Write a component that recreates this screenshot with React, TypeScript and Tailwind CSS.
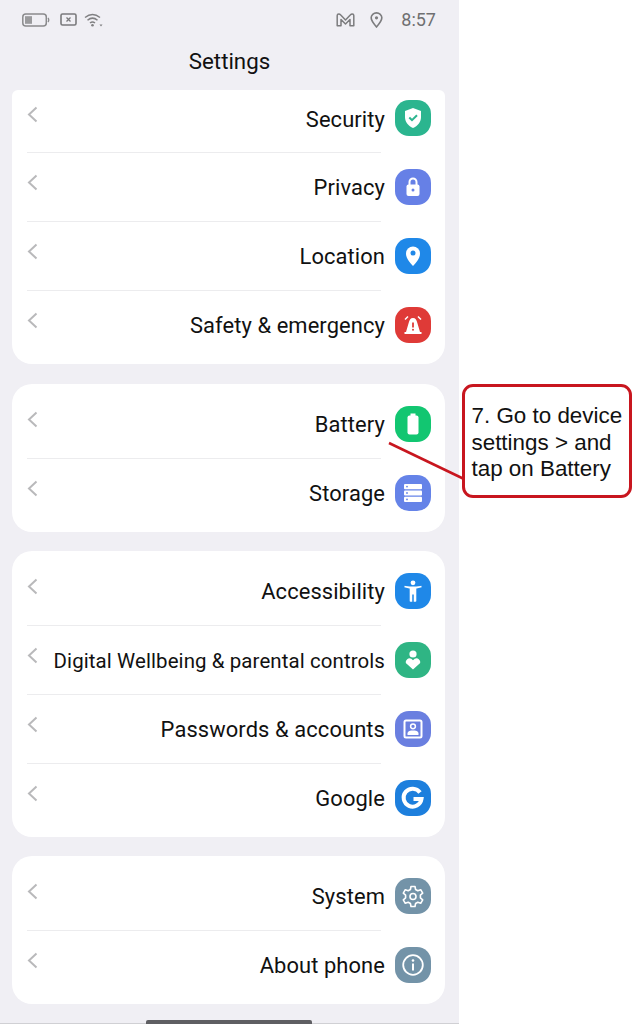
import type { ReactNode } from "react"

type RowProps = {
    label: string
    color: string
    icon: ReactNode
    last?: boolean
    short?: boolean
    small?: boolean
}

const Chevron = ({ short }: { short?: boolean }) => (
    <svg width="11" height="17" viewBox="0 0 11 17" className={`absolute left-[15px] ${short ? "top-[16px]" : "top-[22px]"}`} fill="none">
        <path d="M9.5 1.5 L2 8.5 L9.5 15.5" stroke="#b9b9bb" strokeWidth="2" />
    </svg>
)

const Row = ({ label, color, icon, last, short, small }: RowProps) => (
    <div className={`relative flex items-center justify-end pr-[14px] ${short ? "h-[62px] pb-[6px]" : "h-[69px]"}`}>
        <Chevron short={short} />
        <span className={`${small ? "text-[20.45px]" : "text-[21.9px]"} pt-[3px] leading-none text-[#111] tracking-[0.1px] mr-[10px] whitespace-nowrap`}>{label}</span>
        <div className={`w-[36px] h-[36px] rounded-[14px] flex items-center justify-center ${color}`}>
            <svg width="26" height="26" viewBox="0 0 26 26" fill="none">{icon}</svg>
        </div>
        {!last && <div className="absolute left-[15px] bottom-[-1px] w-[354px] h-px bg-[#ececee]"></div>}
    </div>
)

const App = () => {
    return (
        <div className="relative w-[637px] h-[1024px] overflow-hidden bg-white font-['Roboto',sans-serif]">
            <div className="w-[459px] h-[1024px] bg-[#f0eff4] border-b border-[#d0d0d4]">
                <div className="h-[39px] flex items-center justify-between pl-[22px] pr-[23px]">
                    <div className="flex items-center">
                        <svg width="28" height="14" viewBox="0 0 28 14" fill="none">
                            <rect x="0.8" y="1" width="23.5" height="12" rx="3" stroke="#8a8a8c" strokeWidth="1.5" />
                            <rect x="3" y="3.2" width="7" height="7.6" fill="#9a9a9c" />
                            <path d="M26 5 Q27.5 7 26 9" stroke="#8a8a8c" strokeWidth="1.3" />
                        </svg>
                        <svg width="17" height="13" viewBox="0 0 17 13" fill="none" className="ml-[10px]">
                            <rect x="1" y="1" width="15" height="11" rx="1.5" stroke="#7a7a7c" strokeWidth="1.6" />
                            <path d="M6.5 4.5 L10.5 8.5 M10.5 4.5 L6.5 8.5" stroke="#7a7a7c" strokeWidth="1.3" />
                        </svg>
                        <svg width="19" height="14" viewBox="0 0 19 14" fill="none" className="ml-[7px]">
                            <path d="M1 4.5 Q8.5 -1.5 16 4.5 M3.5 7.3 Q8.5 3 13.5 7.3 M6 10 Q8.5 8 11 10" stroke="#808082" strokeWidth="1.5" />
                            <circle cx="8.5" cy="12.3" r="1.3" fill="#808082" />
                            <path d="M15.5 11.5 L18.5 11.5 L17 13.5 Z" fill="#808082" />
                        </svg>
                    </div>
                    <div className="flex items-center">
                        <svg width="19" height="14" viewBox="0 0 19 14" fill="none">
                            <path d="M1.2 12.8 V2.5 Q1.2 1 2.8 1 Q3.8 1 4.5 1.8 L9.5 7 L14.5 1.8 Q15.2 1 16.2 1 Q17.8 1 17.8 2.5 V12.8 H14 V6.5 L9.5 11 L5 6.5 V12.8 Z" stroke="#7c7c7e" strokeWidth="1.5" strokeLinejoin="round" />
                        </svg>
                        <svg width="13" height="16" viewBox="0 0 12 15" fill="none" className="ml-[15px]">
                            <path d="M6 14 Q1 8.5 1 5.5 A5 4.7 0 0 1 11 5.5 Q11 8.5 6 14 Z" stroke="#7c7c7e" strokeWidth="1.5" />
                            <circle cx="6" cy="5.5" r="1.5" fill="#7c7c7e" />
                        </svg>
                        <span className="ml-[18px] text-[18px] leading-none text-[#6f6f71]">8:57</span>
                    </div>
                </div>
                <div className="h-[51px] flex items-center justify-center pb-[6px] text-[22.3px] leading-none text-[#111]">Settings</div>

                <div className="ml-[12px] mr-[14px] flex flex-col gap-[19px]">
                    <div className="bg-white rounded-t-[6px] rounded-b-[20px] pb-[5px] mb-[1px]">
                        <Row label="Security" color="bg-[#2bb58f]" short icon={<>
                            <path d="M13 3 L21 6 V12 C21 17.5 17.5 21 13 23 C8.5 21 5 17.5 5 12 V6 Z" fill="white" />
                            <path d="M9.3 12.5 L12 15.2 L17 10.2" stroke="#2bb58f" strokeWidth="2" />
                        </>} />
                        <Row label="Privacy" color="bg-[#6680e6]" icon={<>
                            <path d="M9.5 11 V8 A3.5 3.5 0 0 1 16.5 8 V11" stroke="white" strokeWidth="2" />
                            <rect x="6.5" y="10.5" width="13" height="11.5" rx="2" fill="white" />
                            <circle cx="13" cy="16" r="1.5" fill="#6680e6" />
                        </>} />
                        <Row label="Location" color="bg-[#1f88e8]" icon={<>
                            <path d="M13 23 C9 18.5 6 15 6 10.5 A7 7 0 0 1 20 10.5 C20 15 17 18.5 13 23 Z" fill="white" />
                            <circle cx="13" cy="10" r="2.5" fill="#1f88e8" />
                        </>} />
                        <Row label="Safety & emergency" color="bg-[#df3a37]" last icon={<>
                            <path d="M13 6 C10.5 6 9.5 8 8.8 10.5 L6 20 H20 L17.2 10.5 C16.5 8 15.5 6 13 6 Z" fill="white" />
                            <rect x="4.5" y="20" width="17" height="2" fill="white" />
                            <path d="M13 10.5 V15.5" stroke="#df3a37" strokeWidth="1.8" />
                            <circle cx="13" cy="17.7" r="1" fill="#df3a37" />
                            <path d="M8 4.5 L5 7.5 M18 4.5 L21 7.5" stroke="white" strokeWidth="1.5" />
                        </>} />
                    </div>

                    <div className="bg-white rounded-[20px] py-[5px]">
                        <Row label="Battery" color="bg-[#12c671]" icon={<>
                            <rect x="10.5" y="2.5" width="5" height="3" fill="white" />
                            <rect x="7.5" y="4.5" width="11" height="19" rx="2" fill="white" />
                        </>} />
                        <Row label="Storage" color="bg-[#6583e8]" last icon={<>
                            <rect x="4" y="4" width="18" height="5.2" rx="1" fill="white" />
                            <rect x="4" y="10.4" width="18" height="5.2" rx="1" fill="white" />
                            <rect x="4" y="16.8" width="18" height="5.2" rx="1" fill="white" />
                            <circle cx="7" cy="6.6" r="0.9" fill="#6583e8" />
                            <circle cx="7" cy="13" r="0.9" fill="#6583e8" />
                            <circle cx="7" cy="19.4" r="0.9" fill="#6583e8" />
                        </>} />
                    </div>

                    <div className="bg-white rounded-[20px] py-[5px]">
                        <Row label="Accessibility" color="bg-[#1f88e8]" icon={<>
                            <circle cx="13" cy="4.8" r="2.4" fill="white" />
                            <path d="M4.5 8.5 L10.5 10 V23 H11.8 V16 H14.2 V23 H15.5 V10 L21.5 8.5" stroke="white" strokeWidth="1.6" strokeLinejoin="round" fill="white" />
                            <path d="M13 16.5 V23.5" stroke="#1f88e8" strokeWidth="1.2" />
                        </>} />
                        <Row label="Digital Wellbeing & parental controls" color="bg-[#2fb584]" small icon={<>
                            <circle cx="13" cy="7" r="3.6" fill="white" />
                            <path d="M13 22.5 L5.8 16 A3.8 3.8 0 0 1 11.3 11.8 L13 13.3 L14.7 11.8 A3.8 3.8 0 0 1 20.2 16 Z" fill="white" />
                        </>} />
                        <Row label="Passwords & accounts" color="bg-[#6a7fe0]" icon={<>
                            <rect x="4.5" y="4.5" width="17" height="17" rx="1.5" stroke="white" strokeWidth="2" />
                            <circle cx="13" cy="10.3" r="2.4" stroke="white" strokeWidth="1.5" />
                            <path d="M7.5 19 V17.5 C7.5 15 10.5 14.5 13 14.5 C15.5 14.5 18.5 15 18.5 17.5 V19 Z" fill="white" />
                        </>} />
                        <Row label="Google" color="bg-[#1d7fdd]" last icon={<>
                            <path d="M20 7.5 A9 9 0 1 0 21.5 14 H13.5" stroke="white" strokeWidth="4" />
                        </>} />
                    </div>

                    <div className="bg-white rounded-[20px] py-[5px]">
                        <Row label="System" color="bg-[#7393a8]" icon={<>
                            <path d="M11 3.5 H15 L15.6 6.5 L17.8 7.7 L20.7 6.7 L22.7 10.2 L20.4 12.2 V14.8 L22.7 16.8 L20.7 20.3 L17.8 19.3 L15.6 20.5 L15 23.5 H11 L10.4 20.5 L8.2 19.3 L5.3 20.3 L3.3 16.8 L5.6 14.8 V12.2 L3.3 10.2 L5.3 6.7 L8.2 7.7 L10.4 6.5 Z" stroke="white" strokeWidth="1.6" strokeLinejoin="round" />
                            <circle cx="13" cy="13.5" r="3" stroke="white" strokeWidth="1.6" />
                        </>} />
                        <Row label="About phone" color="bg-[#7393a8]" last icon={<>
                            <circle cx="13" cy="13" r="9.8" stroke="white" strokeWidth="1.8" />
                            <circle cx="13" cy="8.5" r="1.3" fill="white" />
                            <path d="M13 11.5 V18.5" stroke="white" strokeWidth="2" />
                        </>} />
                    </div>
                </div>
                <div className="mt-[16px] ml-[146px] w-[166px] h-[4px] rounded-t-[2px] bg-[#5f5f63]"></div>
            </div>

            {/* callout over the screenshot */}
            <svg width="80" height="40" viewBox="0 0 80 40" className="absolute left-[387px] top-[441px]" fill="none">
                <path d="M2 2 L77 38" stroke="#c8161f" strokeWidth="2.5" />
            </svg>
            <div className="absolute left-[462px] top-[384px] w-[170px] h-[114px] bg-white border-[3px] border-[#c8161f] rounded-[11px] pl-[6.5px] pt-[16px] font-['Liberation_Sans',sans-serif] text-[22.4px] leading-[26.5px] text-[#111] whitespace-nowrap">
                7. Go to device<br />settings &gt; and<br />tap on Battery
            </div>
        </div>
    )
}

export default App
